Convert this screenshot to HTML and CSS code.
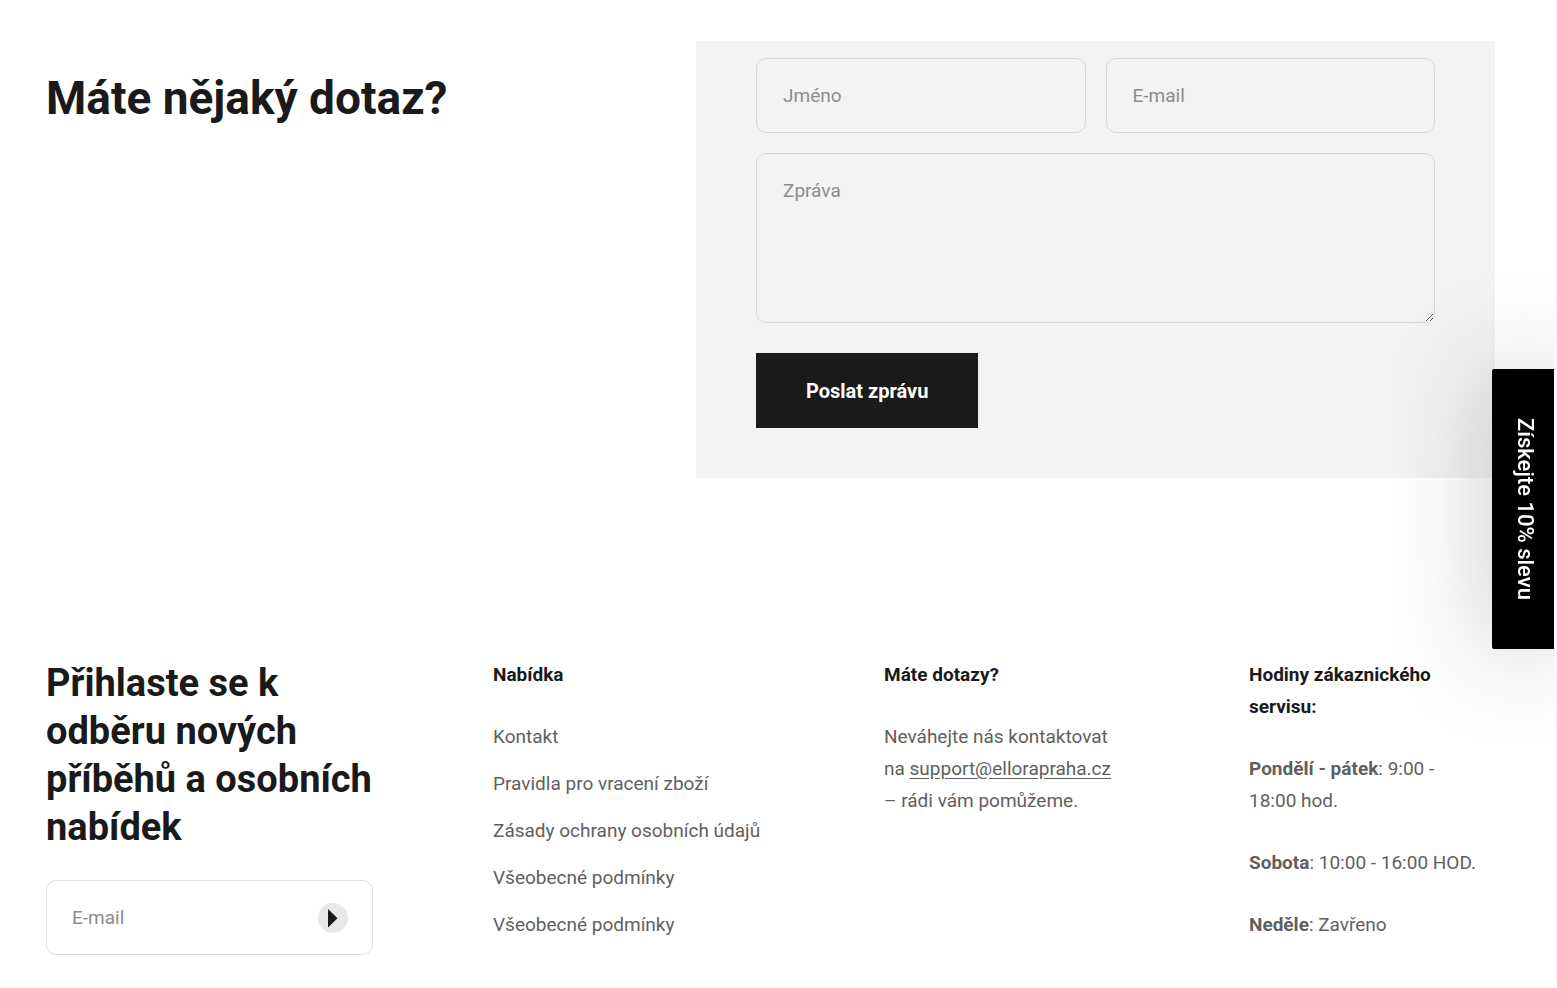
FILE: index.html
```html
<!DOCTYPE html>
<html lang="cs">
<head>
<meta charset="utf-8">
<meta name="viewport" content="width=device-width, initial-scale=1">
<title>Kontakt</title>
<link rel="stylesheet" href="styles.css">
</head>
<body>
<main class="contact">
  <h1 class="contact-title">Máte nějaký dotaz?</h1>
  <form class="contact-form">
    <div class="field-row">
      <input class="field" type="text" placeholder="Jméno" aria-label="Jméno">
      <input class="field" type="email" placeholder="E-mail" aria-label="E-mail">
    </div>
    <textarea class="field field-message" placeholder="Zpráva" aria-label="Zpráva"></textarea>
    <button class="submit" type="submit">Poslat zprávu</button>
  </form>
</main>
<footer class="footer">
  <section>
    <h2 class="newsletter-title">Přihlaste se k odběru nových příběhů a osobních nabídek</h2>
    <form class="newsletter-form">
      <input class="newsletter-input" type="email" placeholder="E-mail" aria-label="E-mail">
      <button class="newsletter-button" type="submit" aria-label="Odeslat">
        <svg width="30" height="30" viewBox="0 0 30 30" aria-hidden="true"><path d="M10 6v18.500L19.500 15.250z" fill="#1a1a1a"/></svg>
      </button>
    </form>
  </section>
  <nav aria-label="Nabídka">
    <h3 class="footer-title">Nabídka</h3>
    <ul class="menu">
      <li><a href="#">Kontakt</a></li>
      <li><a href="#">Pravidla pro vracení zboží</a></li>
      <li><a href="#">Zásady ochrany osobních údajů</a></li>
      <li><a href="#">Všeobecné podmínky</a></li>
      <li><a href="#">Všeobecné podmínky</a></li>
    </ul>
  </nav>
  <section>
    <h3 class="footer-title">Máte dotazy?</h3>
    <p>Neváhejte nás kontaktovat na&nbsp;<a class="mail" href="mailto:support@ellorapraha.cz">support@ellorapraha.cz</a><br>– rádi vám pomůžeme.</p>
  </section>
  <section>
    <h3 class="footer-title">Hodiny zákaznického servisu:</h3>
    <p><strong>Pondělí - pátek</strong>: 9:00 - 18:00&nbsp;hod.</p>
    <p><strong>Sobota</strong>: 10:00 - 16:00 HOD.</p>
    <p><strong>Neděle</strong>: Zavřeno</p>
  </section>
</footer>
<button class="discount-tab" type="button">Získejte 10% slevu</button>
</body>
</html>
```
FILE: styles.css
```css
* {
  box-sizing: border-box;
}

body {
  margin: 0;
  min-height: 100vh;
  border-right: 3px solid #fafafa;
  background: #fff;
  color: #5f5f5f;
  font-family: Roboto, "Liberation Sans", sans-serif;
  font-size: 19px;
  line-height: 32px;
}

h1, h2, h3, p, ul {
  margin: 0;
}

input, textarea, button {
  font: inherit;
}

.contact {
  display: grid;
  grid-template-columns: 650fr 799fr;
  align-items: start;
  padding: 41px 59px 0 46px;
}

.contact-title {
  padding-top: 28px;
  color: #1a1a1a;
  font-size: 46px;
  line-height: 58px;
}

.contact-form {
  display: grid;
  gap: 20px;
  padding: 17px 60px 50px;
  background: #f3f3f3;
}

.field-row {
  display: grid;
  grid-template-columns: 1fr 1fr;
  gap: 20px;
}

.field {
  width: 100%;
  min-width: 0;
  height: 75px;
  padding: 21px 26px;
  border: 1px solid #d8d8d8;
  border-radius: 10px;
  background: transparent;
  color: #1a1a1a;
}

.field-message {
  display: block;
  height: 170px;
}

.field::placeholder,
.newsletter-input::placeholder {
  color: #8c8c8c;
  opacity: 1;
}

.submit {
  justify-self: start;
  height: 75px;
  margin-top: 10px;
  padding: 0 50px;
  border: 0;
  background: #1a1a1a;
  color: #fff;
  font-size: 20px;
  font-weight: 700;
}

.footer {
  display: grid;
  grid-template-columns: minmax(0, 327fr) minmax(0, 271fr) minmax(0, 245fr) minmax(0, 246fr);
  gap: 120px;
  padding: 181px 59px 32px 46px;
}

.newsletter-title {
  color: #1a1a1a;
  font-size: 38px;
  line-height: 48px;
}

.newsletter-form {
  display: flex;
  align-items: center;
  height: 75px;
  margin-top: 29px;
  padding-right: 24px;
  border: 1px solid #e0e0e0;
  border-radius: 10px;
}

.newsletter-input {
  flex: 1;
  min-width: 0;
  padding: 0 25px;
  border: 0;
  background: transparent;
}

.newsletter-button {
  width: 30px;
  height: 30px;
  padding: 0;
  border: 0;
  border-radius: 50%;
  background: #e8e8e8;
}

.newsletter-button svg {
  display: block;
}

.footer-title {
  margin-bottom: 30px;
  color: #1a1a1a;
  font-size: 19px;
}

.footer p + p {
  margin-top: 30px;
}

.menu {
  display: grid;
  gap: 15px;
  padding: 0;
  list-style: none;
  white-space: nowrap;
}

.footer a {
  color: inherit;
  text-decoration: none;
}

.footer .mail {
  text-decoration: underline;
  text-underline-offset: 3px;
}

.discount-tab {
  position: fixed;
  top: 369px;
  right: 3px;
  width: 62px;
  height: 280px;
  padding: 0 0 0 4px;
  border: 0;
  border-radius: 2px 0 0 2px;
  background: #000;
  box-shadow: 0 0 100px rgba(0, 0, 0, 0.25);
  clip-path: inset(-100px 0 -100px -100px);
  color: #fff;
  font-size: 22px;
  font-weight: 500;
  writing-mode: vertical-rl;
}
```
